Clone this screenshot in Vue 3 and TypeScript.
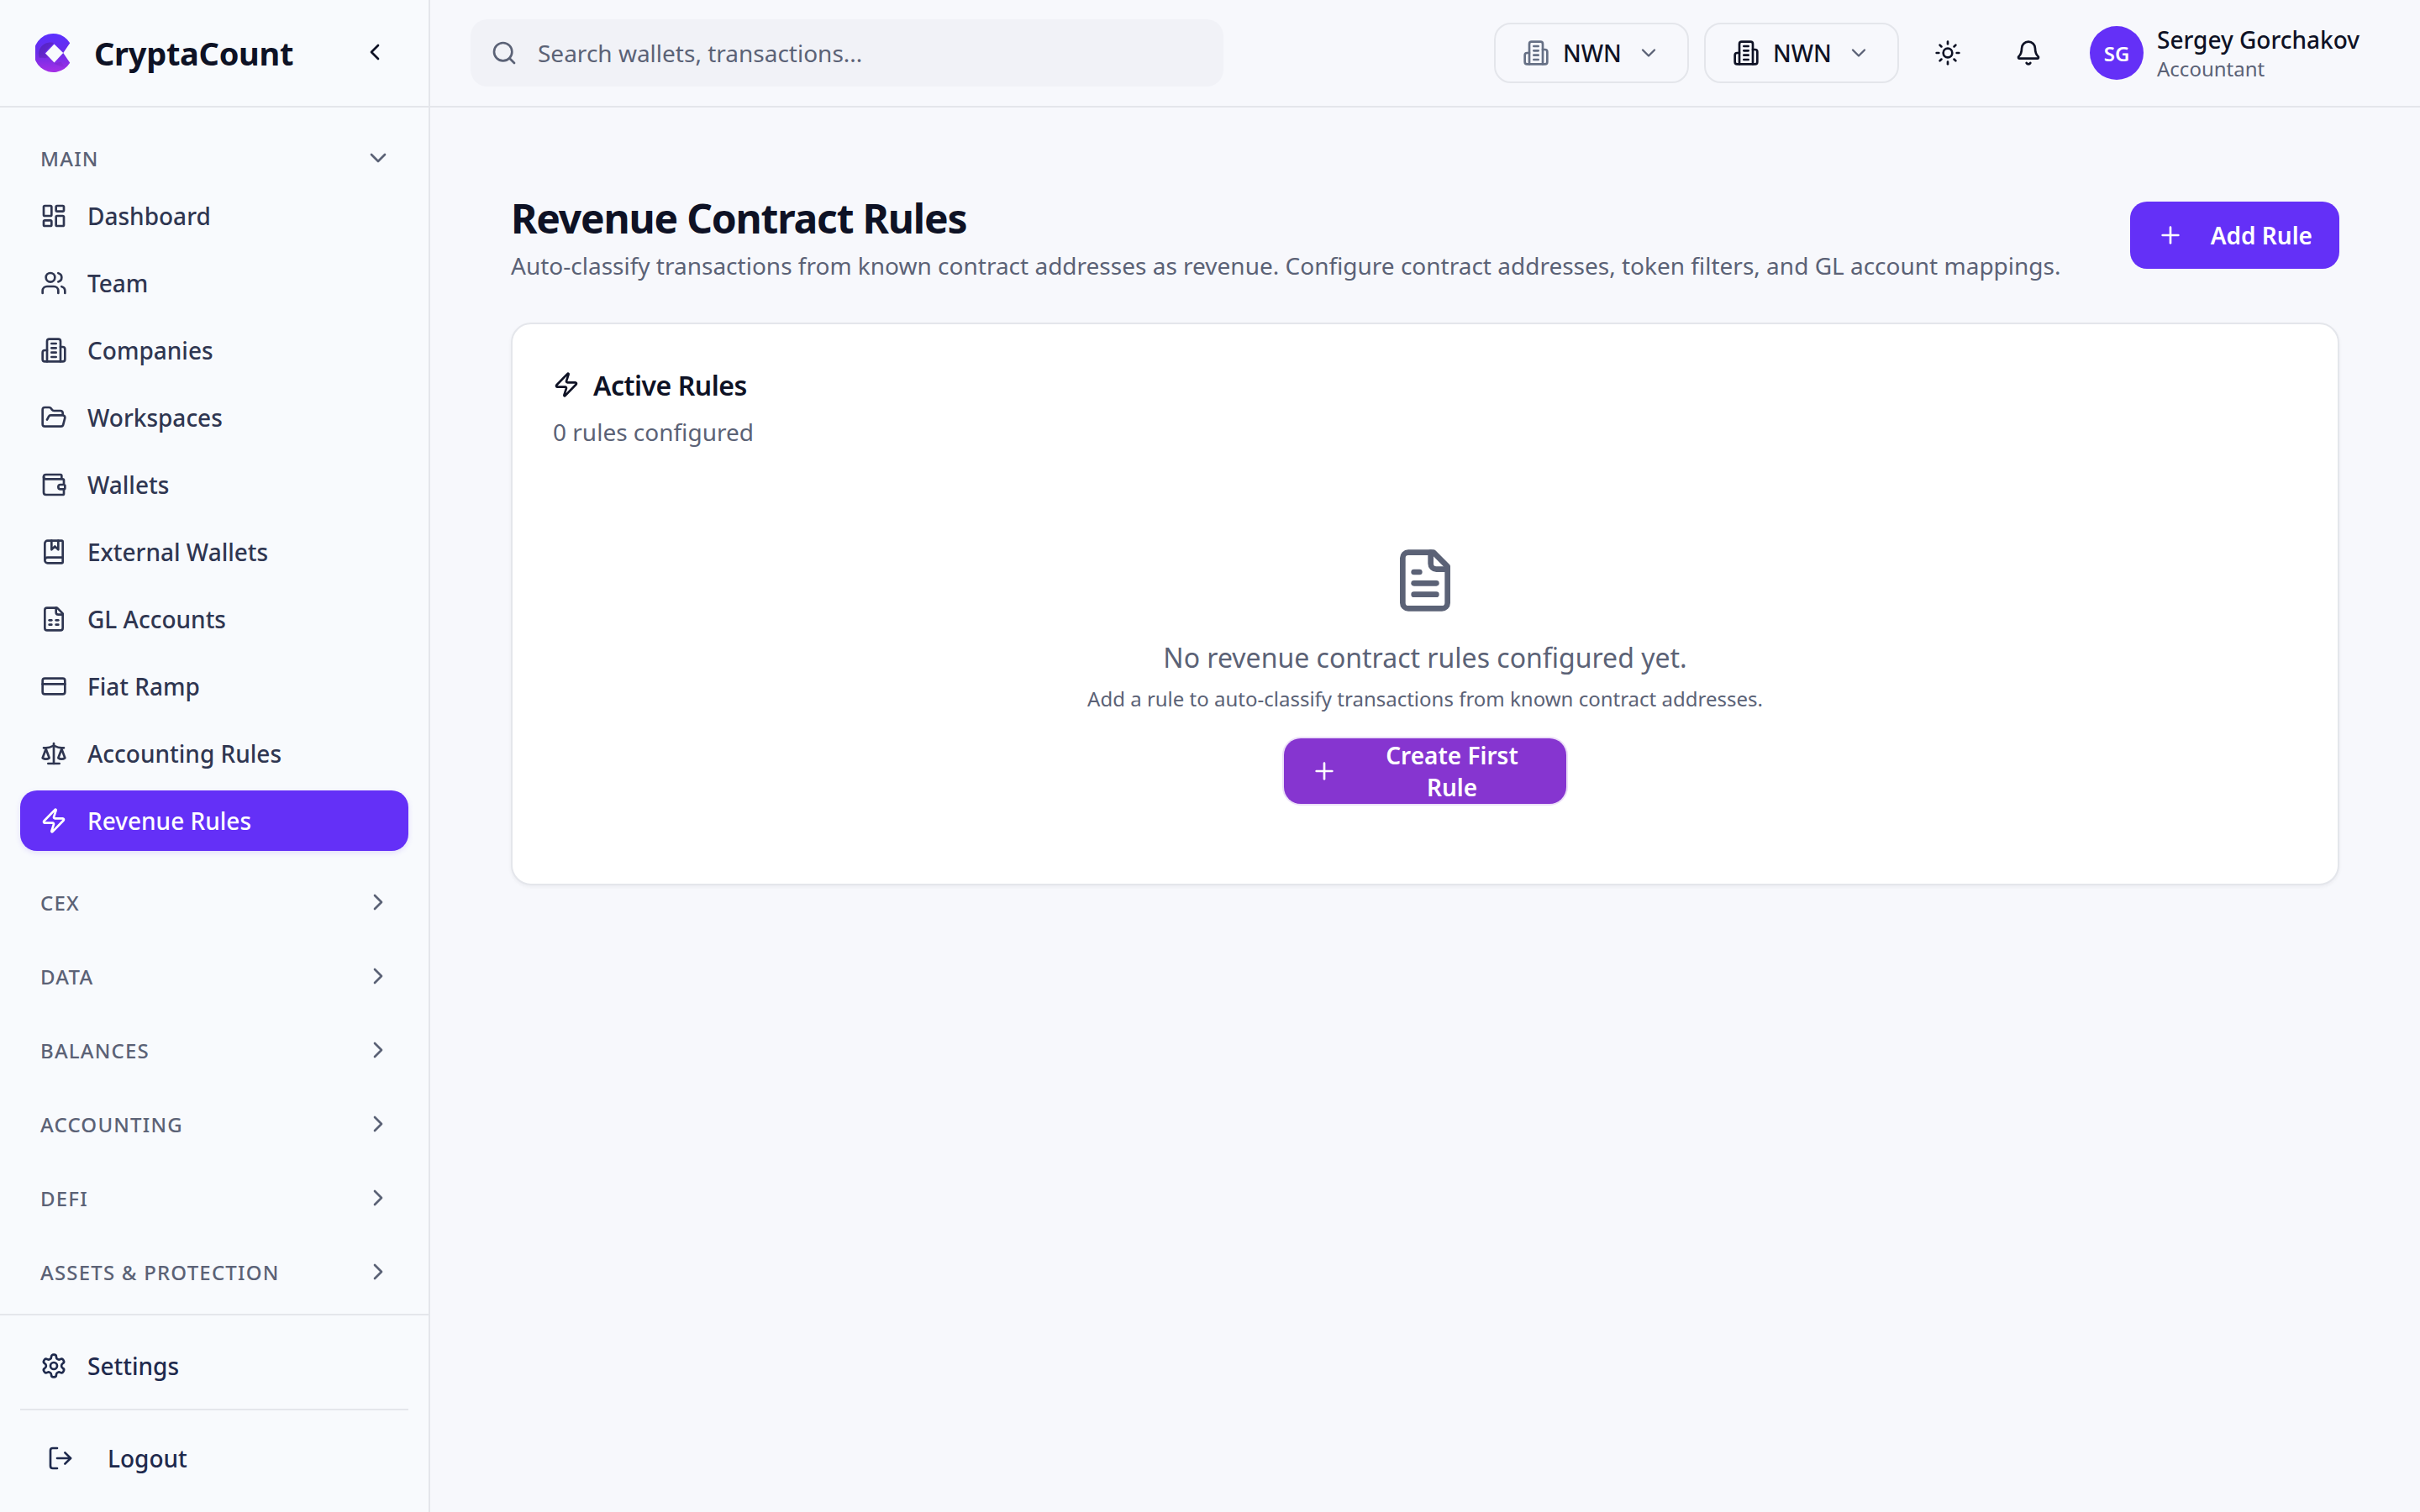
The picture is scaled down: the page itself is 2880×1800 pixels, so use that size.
<script setup lang="ts">
import { h, type FunctionalComponent } from 'vue'

function circle(cx: number, cy: number, r: number): string {
  return `M${cx - r} ${cy}a${r} ${r} 0 1 0 ${r * 2} 0a${r} ${r} 0 1 0 ${-r * 2} 0z`
}

function rect(x: number, y: number, w: number, height: number, r: number): string {
  return `M${x + r} ${y}h${w - 2 * r}a${r} ${r} 0 0 1 ${r} ${r}v${height - 2 * r}a${r} ${r} 0 0 1 ${-r} ${r}h${2 * r - w}a${r} ${r} 0 0 1 ${-r} ${-r}v${2 * r - height}a${r} ${r} 0 0 1 ${r} ${-r}z`
}

const icons: Record<string, string[]> = {
  dashboard: [rect(3, 3, 7, 9, 1), rect(14, 3, 7, 5, 1), rect(14, 12, 7, 9, 1), rect(3, 16, 7, 5, 1)],
  users: [
    'M16 21v-2a4 4 0 0 0-4-4H6a4 4 0 0 0-4 4v2',
    circle(9, 7, 4),
    'M22 21v-2a4 4 0 0 0-3-3.87',
    'M16 3.13a4 4 0 0 1 0 7.75'
  ],
  building: [
    'M6 22V4a2 2 0 0 1 2-2h8a2 2 0 0 1 2 2v18Z',
    'M6 12H4a2 2 0 0 0-2 2v6a2 2 0 0 0 2 2h2',
    'M18 9h2a2 2 0 0 1 2 2v9a2 2 0 0 1-2 2h-2',
    'M10 6h4',
    'M10 10h4',
    'M10 14h4',
    'M10 18h4'
  ],
  folder: [
    'm6 14 1.5-2.9A2 2 0 0 1 9.24 10H20a2 2 0 0 1 1.94 2.5l-1.54 6a2 2 0 0 1-1.95 1.5H4a2 2 0 0 1-2-2V5a2 2 0 0 1 2-2h3.9a2 2 0 0 1 1.69.9l.81 1.2a2 2 0 0 0 1.67.9H18a2 2 0 0 1 2 2v2'
  ],
  wallet: [
    'M19 7V4a1 1 0 0 0-1-1H5a2 2 0 0 0 0 4h15a1 1 0 0 1 1 1v4h-3a2 2 0 0 0 0 4h3a1 1 0 0 0 1-1v-2a1 1 0 0 0-1-1',
    'M3 5v14a2 2 0 0 0 2 2h15a1 1 0 0 0 1-1v-4'
  ],
  book: [
    'M10 2v8l3-3 3 3V2',
    'M4 19.5v-15A2.5 2.5 0 0 1 6.5 2H19a1 1 0 0 1 1 1v18a1 1 0 0 1-1 1H6.5a1 1 0 0 1 0-5H20'
  ],
  sheet: [
    'M15 2H6a2 2 0 0 0-2 2v16a2 2 0 0 0 2 2h12a2 2 0 0 0 2-2V7Z',
    'M14 2v4a2 2 0 0 0 2 2h4',
    'M8 13h2',
    'M14 13h2',
    'M8 17h2',
    'M14 17h2'
  ],
  card: [rect(2, 5, 20, 14, 2), 'M2 10h20'],
  scale: [
    'm16 16 3-8 3 8c-.87.65-1.92 1-3 1s-2.13-.35-3-1Z',
    'm2 16 3-8 3 8c-.87.65-1.92 1-3 1s-2.13-.35-3-1Z',
    'M7 21h10',
    'M12 3v18',
    'M3 7h2c2 0 5-1 7-2 2 1 5 2 7 2h2'
  ],
  zap: [
    'M4 14a1 1 0 0 1-.78-1.63l9.9-10.2a.5.5 0 0 1 .86.46l-1.92 6.02A1 1 0 0 0 13 10h7a1 1 0 0 1 .78 1.63l-9.9 10.2a.5.5 0 0 1-.86-.46l1.92-6.02A1 1 0 0 0 11 14z'
  ],
  settings: [
    'M12.22 2h-.44a2 2 0 0 0-2 2v.18a2 2 0 0 1-1 1.73l-.43.25a2 2 0 0 1-2 0l-.15-.08a2 2 0 0 0-2.73.73l-.22.38a2 2 0 0 0 .73 2.73l.15.1a2 2 0 0 1 1 1.72v.51a2 2 0 0 1-1 1.74l-.15.09a2 2 0 0 0-.73 2.73l.22.38a2 2 0 0 0 2.73.73l.15-.08a2 2 0 0 1 2 0l.43.25a2 2 0 0 1 1 1.73V20a2 2 0 0 0 2 2h.44a2 2 0 0 0 2-2v-.18a2 2 0 0 1 1-1.73l.43-.25a2 2 0 0 1 2 0l.15.08a2 2 0 0 0 2.73-.73l.22-.39a2 2 0 0 0-.73-2.73l-.15-.08a2 2 0 0 1-1-1.74v-.5a2 2 0 0 1 1-1.74l.15-.09a2 2 0 0 0 .73-2.73l-.22-.38a2 2 0 0 0-2.73-.73l-.15.08a2 2 0 0 1-2 0l-.43-.25a2 2 0 0 1-1-1.73V4a2 2 0 0 0-2-2z',
    circle(12, 12, 3)
  ],
  logout: ['M9 21H5a2 2 0 0 1-2-2V5a2 2 0 0 1 2-2h4', 'm16 17 5-5-5-5', 'M21 12H9'],
  sun: [
    circle(12, 12, 4),
    'M12 2v2',
    'M12 20v2',
    'm4.93 4.93 1.41 1.41',
    'm17.66 17.66 1.41 1.41',
    'M2 12h2',
    'M20 12h2',
    'm6.34 17.66-1.41 1.41',
    'm19.07 4.93-1.41 1.41'
  ],
  bell: [
    'M10.268 21a2 2 0 0 0 3.464 0',
    'M3.262 15.326A1 1 0 0 0 4 17h16a1 1 0 0 0 .74-1.673C19.41 13.956 18 12.499 18 8A6 6 0 0 0 6 8c0 4.499-1.411 5.956-2.738 7.326'
  ],
  search: [circle(11, 11, 8), 'm21 21-4.3-4.3'],
  fileText: [
    'M15 2H6a2 2 0 0 0-2 2v16a2 2 0 0 0 2 2h12a2 2 0 0 0 2-2V7Z',
    'M14 2v4a2 2 0 0 0 2 2h4',
    'M10 9H8',
    'M16 13H8',
    'M16 17H8'
  ],
  plus: ['M5 12h14', 'M12 5v14'],
  chevronDown: ['m6 9 6 6 6-6'],
  chevronRight: ['m9 18 6-6-6-6'],
  chevronLeft: ['m15 18-6-6 6-6']
}

const Icon: FunctionalComponent<{ name: string }> = (props) =>
  h(
    'svg',
    {
      viewBox: '0 0 24 24',
      fill: 'none',
      stroke: 'currentColor',
      'stroke-width': 2,
      'stroke-linecap': 'round',
      'stroke-linejoin': 'round'
    },
    icons[props.name].map((d) => h('path', { d }))
  )
Icon.props = ['name']

const mainItems = [
  { label: 'Dashboard', icon: 'dashboard' },
  { label: 'Team', icon: 'users' },
  { label: 'Companies', icon: 'building' },
  { label: 'Workspaces', icon: 'folder' },
  { label: 'Wallets', icon: 'wallet' },
  { label: 'External Wallets', icon: 'book' },
  { label: 'GL Accounts', icon: 'sheet' },
  { label: 'Fiat Ramp', icon: 'card' },
  { label: 'Accounting Rules', icon: 'scale' },
  { label: 'Revenue Rules', icon: 'zap', active: true }
]

const collapsedSections = ['CEX', 'DATA', 'BALANCES', 'ACCOUNTING', 'DEFI', 'ASSETS & PROTECTION']
</script>

<template>
  <div class="app">
    <aside class="sidebar">
      <div class="brand">
        <svg class="logo" viewBox="0 0 48 48">
          <defs>
            <linearGradient id="logoFill" x1="0.5" y1="0" x2="0.5" y2="1">
              <stop offset="0" stop-color="#5b30ff" />
              <stop offset="0.5" stop-color="#6a2ce8" />
              <stop offset="1" stop-color="#a62fe6" />
            </linearGradient>
            <linearGradient id="logoShade" x1="0" y1="0" x2="1" y2="1">
              <stop offset="0" stop-color="#4a1fb0" stop-opacity="0.75" />
              <stop offset="1" stop-color="#7a22b8" stop-opacity="0.2" />
            </linearGradient>
          </defs>
          <path d="M43 11.7A24 24 0 1 0 43 36.3L34.7 24Z" fill="url(#logoFill)" />
          <path d="M5 30C2 20 9 11 19 11c2 0 4 .5 4 .5L11 24l13 13 8-2 4 6c-2 1-5-1-9-2-7-2-8-11-13-9-2 .8-3 .5-4 0z" fill="url(#logoShade)" />
          <path d="M23.5 13L34.7 24 23.5 36 12.500 24.500Z" fill="#f8fafd" />
        </svg>
        <span class="brand-name">CryptaCount</span>
        <Icon name="chevronLeft" class="collapse" />
      </div>

      <nav class="nav">
        <section>
          <div class="section-head">
            <span>MAIN</span>
            <Icon name="chevronDown" class="section-chevron" />
          </div>
          <ul class="items">
            <li v-for="item in mainItems" :key="item.label" class="item" :class="{ active: item.active }">
              <Icon :name="item.icon" class="item-icon" />
              <span>{{ item.label }}</span>
            </li>
          </ul>
        </section>
        <section v-for="name in collapsedSections" :key="name">
          <div class="section-head">
            <span>{{ name }}</span>
            <Icon name="chevronRight" class="section-chevron" />
          </div>
        </section>
      </nav>

      <div class="side-foot">
        <div class="item foot-item">
          <Icon name="settings" class="item-icon" />
          <span>Settings</span>
        </div>
        <hr class="foot-rule" />
        <div class="item foot-item logout">
          <Icon name="logout" class="item-icon" />
          <span>Logout</span>
        </div>
      </div>
    </aside>

    <div class="main">
      <header class="topbar">
        <div class="search">
          <Icon name="search" class="search-icon" />
          <span>Search wallets, transactions...</span>
        </div>
        <div class="top-actions">
          <button class="picker">
            <Icon name="building" class="picker-icon muted" />
            <span>NWN</span>
            <Icon name="chevronDown" class="picker-chevron" />
          </button>
          <button class="picker">
            <Icon name="building" class="picker-icon" />
            <span>NWN</span>
            <Icon name="chevronDown" class="picker-chevron" />
          </button>
          <button class="icon-btn"><Icon name="sun" class="top-icon" /></button>
          <button class="icon-btn"><Icon name="bell" class="top-icon" /></button>
          <div class="user">
            <div class="avatar">SG</div>
            <div class="user-text">
              <div class="user-name">Sergey Gorchakov</div>
              <div class="user-role">Accountant</div>
            </div>
          </div>
        </div>
      </header>

      <main class="content">
        <div class="page-head">
          <div>
            <h1>Revenue Contract Rules</h1>
            <p>Auto-classify transactions from known contract addresses as revenue. Configure contract addresses, token filters, and GL account mappings.</p>
          </div>
          <button class="primary">
            <Icon name="plus" class="plus" />
            <span>Add Rule</span>
          </button>
        </div>

        <div class="card">
          <div class="card-title">
            <Icon name="zap" class="card-icon" />
            <span>Active Rules</span>
          </div>
          <div class="card-sub">0 rules configured</div>

          <div class="empty">
            <Icon name="fileText" class="empty-icon" />
            <div class="empty-title">No revenue contract rules configured yet.</div>
            <div class="empty-sub">Add a rule to auto-classify transactions from known contract addresses.</div>
            <button class="primary create">
              <Icon name="plus" class="plus" />
              <span>Create First Rule</span>
            </button>
          </div>
        </div>
      </main>
    </div>
  </div>
</template>

<style>
html,
body {
  margin: 0;
  background: #f7f8fc;
}
</style>

<style scoped>
.app {
  display: flex;
  width: 2880px;
  height: 1800px;
  overflow: hidden;
  font-family: "Noto Sans", "Open Sans", sans-serif;
  color: #0e1225;
  background: #f7f8fc;
}

.sidebar {
  width: 512px;
  box-sizing: border-box;
  flex: none;
  display: flex;
  flex-direction: column;
  background: #f8fafd;
  border-right: 2px solid #e4e6eb;
}

.brand {
  height: 128px;
  box-sizing: border-box;
  flex: none;
  display: flex;
  align-items: center;
  padding: 0 48px 0 42px;
  border-bottom: 2px solid #e4e6eb;
}

.logo {
  width: 46px;
  height: 48px;
  flex: none;
}

.brand-name {
  margin-left: 24px;
  font-size: 38px;
  font-weight: 700;
  letter-spacing: -0.3px;
}

.collapse {
  width: 32px;
  height: 32px;
  margin-left: auto;
  margin-top: -2px;
}

.nav {
  flex: 1;
  display: flex;
  flex-direction: column;
  gap: 37px;
  padding: 36px 24px 0;
}

.section-head {
  height: 48px;
  margin-bottom: 3px;
  padding: 0 24px;
  display: flex;
  align-items: center;
  justify-content: space-between;
  font-size: 24px;
  font-weight: 500;
  letter-spacing: 1.2px;
  color: #5b6276;
}

.section-chevron {
  width: 32px;
  height: 32px;
  margin-right: -4px;
}

.items {
  list-style: none;
  margin: 9px 0 0;
  padding: 0;
  display: flex;
  flex-direction: column;
  gap: 8px;
}

.item {
  height: 72px;
  box-sizing: border-box;
  display: flex;
  align-items: center;
  gap: 24px;
  padding: 0 24px;
  border-radius: 20px;
  font-size: 28px;
  font-weight: 500;
  color: #2f3651;
}

.item.active {
  background: #6430f7;
  color: #fff;
  box-shadow: 0 2px 6px rgba(100, 48, 247, 0.15);
}

.item-icon {
  width: 32px;
  height: 32px;
  flex: none;
}

.side-foot {
  flex: none;
  height: 236px;
  box-sizing: border-box;
  padding: 24px 24px 0;
  border-top: 2px solid #e4e6eb;
}

.foot-item {
  color: #1f2a4d;
}

.foot-rule {
  margin: 15px 0 21px;
  border: 0;
  border-top: 2px solid #e4e6eb;
}

.logout {
  gap: 40px;
  padding-left: 32px;
}

.main {
  flex: 1;
  min-width: 0;
  display: flex;
  flex-direction: column;
}

.topbar {
  height: 128px;
  box-sizing: border-box;
  flex: none;
  display: flex;
  align-items: center;
  justify-content: space-between;
  padding: 0 72px 0 48px;
  border-bottom: 2px solid #e4e6eb;
}

.search {
  width: 896px;
  height: 80px;
  box-sizing: border-box;
  display: flex;
  align-items: center;
  gap: 24px;
  padding: 0 24px;
  border-radius: 20px;
  background: #f1f2f7;
  font-size: 28px;
  color: #5b6276;
}

.search-icon {
  width: 32px;
  height: 32px;
  flex: none;
}

.top-actions {
  display: flex;
  align-items: center;
}

.picker {
  width: 232px;
  height: 72px;
  box-sizing: border-box;
  margin-right: 18px;
  display: flex;
  align-items: center;
  padding: 0 32px;
  gap: 16px;
  border: 2px solid #e4e6eb;
  border-radius: 20px;
  background: transparent;
  font: inherit;
  font-size: 28px;
  font-weight: 500;
  color: #0e1225;
}

.picker-icon {
  width: 32px;
  height: 32px;
  flex: none;
}

.picker-icon.muted {
  color: #667085;
}

.picker-chevron {
  width: 28px;
  height: 28px;
  margin-left: auto;
  color: #5b6276;
}

.icon-btn {
  width: 80px;
  height: 80px;
  margin-right: 16px;
  padding: 0;
  display: flex;
  align-items: center;
  justify-content: center;
  border: 0;
  background: transparent;
  color: #0e1225;
}

.top-icon {
  width: 32px;
  height: 32px;
}

.user {
  display: flex;
  align-items: center;
  gap: 16px;
  margin-left: 17px;
}

.avatar {
  width: 64px;
  height: 64px;
  border-radius: 50%;
  background: #6430f7;
  color: #fff;
  font-size: 24px;
  font-weight: 600;
  display: flex;
  align-items: center;
  justify-content: center;
}

.user-name {
  font-size: 28px;
  font-weight: 500;
  line-height: 38px;
}

.user-role {
  font-size: 24px;
  line-height: 32px;
  color: #5b6276;
}

.content {
  flex: 1;
  padding: 96px 96px 0;
}

.page-head {
  display: flex;
  align-items: center;
  justify-content: space-between;
  margin-bottom: 48px;
}

h1 {
  margin: 0;
  font-size: 48px;
  line-height: 72px;
  font-weight: 700;
  letter-spacing: -1.2px;
}

.page-head p {
  margin: 0;
  font-size: 28px;
  line-height: 40px;
  color: #5b6276;
}

.primary {
  height: 80px;
  box-sizing: border-box;
  display: flex;
  align-items: center;
  gap: 32px;
  padding: 0 32px;
  border: 0;
  border-radius: 20px;
  background: #6430f7;
  color: #fff;
  font: inherit;
  font-size: 28px;
  font-weight: 600;
}

.plus {
  width: 32px;
  height: 32px;
  flex: none;
}

.card {
  height: 670px;
  box-sizing: border-box;
  padding: 50px 48px 0;
  background: #fff;
  border: 2px solid #e4e6eb;
  border-radius: 24px;
  box-shadow: 0 2px 4px rgba(16, 24, 40, 0.05);
}

.card-title {
  display: flex;
  align-items: center;
  gap: 16px;
  height: 44px;
  font-size: 32px;
  font-weight: 600;
  letter-spacing: -0.5px;
}

.card-icon {
  width: 32px;
  height: 32px;
  flex: none;
}

.card-sub {
  margin-top: 14px;
  font-size: 28px;
  line-height: 40px;
  color: #5b6276;
}

.empty {
  display: flex;
  flex-direction: column;
  align-items: center;
  margin-top: 117px;
}

.empty-icon {
  width: 80px;
  height: 80px;
  color: #5b6276;
}

.empty-title {
  margin-top: 28px;
  font-size: 32px;
  line-height: 48px;
  color: #5b6276;
}

.empty-sub {
  margin-top: 9px;
  font-size: 24px;
  line-height: 32px;
  color: #5b6276;
}

.create {
  margin-top: 31px;
  height: 78px;
  width: 336px;
  background: #8635d0;
  box-shadow: 0 0 0 2px #ecdff8;
}
</style>
